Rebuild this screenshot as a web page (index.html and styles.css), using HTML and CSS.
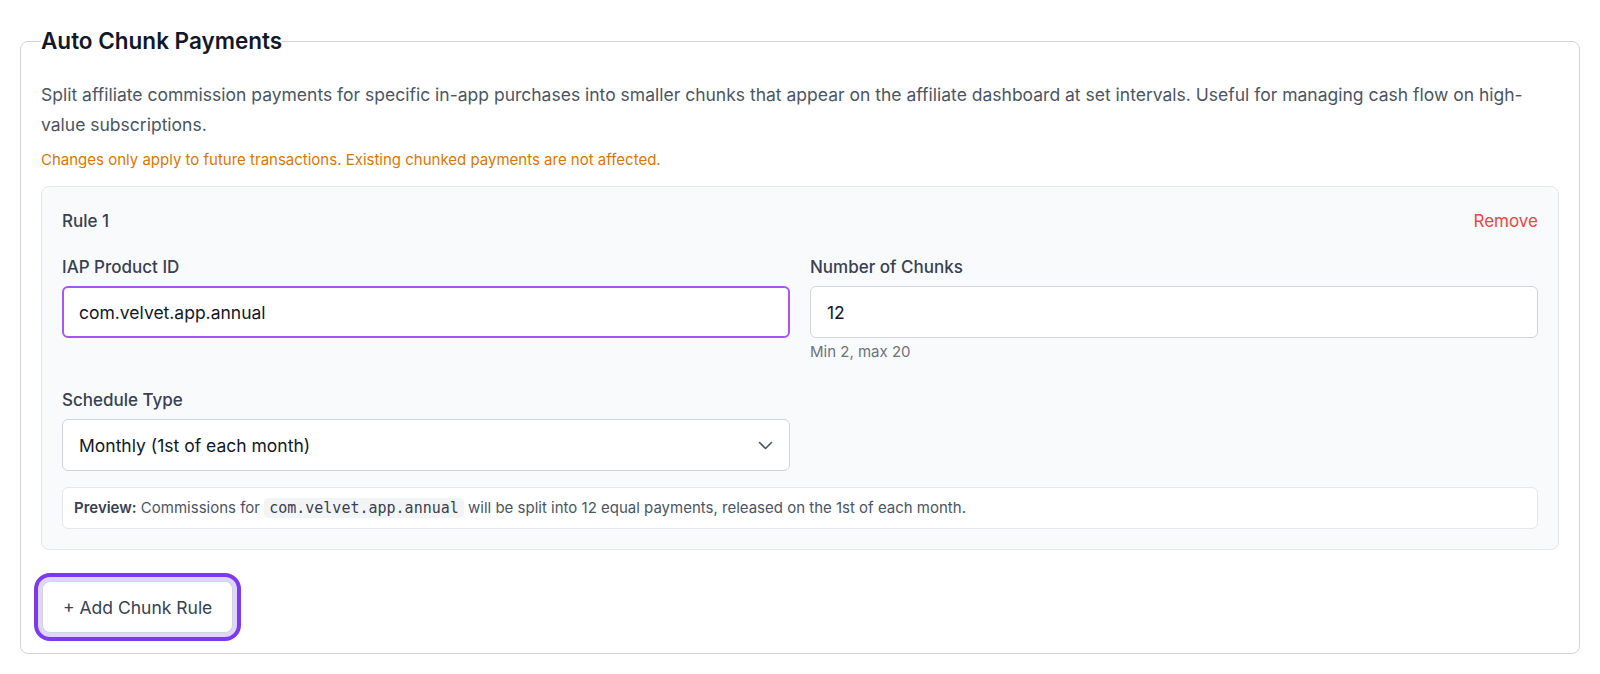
FILE: index.html
```html
<!DOCTYPE html>
<html lang="en">
<head>
<meta charset="utf-8">
<title>Auto Chunk Payments</title>
<link rel="stylesheet" href="styles.css">
</head>
<body>
<fieldset class="panel">
  <legend class="panel-title">Auto Chunk Payments</legend>
  <p class="desc">Split affiliate commission payments for specific in-app purchases into smaller chunks that appear on the affiliate dashboard at set intervals. Useful for managing cash flow on high-value subscriptions.</p>
  <p class="warn">Changes only apply to future transactions. Existing chunked payments are not affected.</p>

  <div class="rule-card">
    <div class="rule-head">
      <span class="rule-name">Rule 1</span>
      <button class="remove" type="button">Remove</button>
    </div>
    <div class="rule-grid">
      <div class="field">
        <label class="label" for="pid">IAP Product ID</label>
        <input id="pid" class="input input-focus" type="text" value="com.velvet.app.annual">
      </div>
      <div class="field">
        <label class="label" for="chunks">Number of Chunks</label>
        <input id="chunks" class="input" type="text" value="12">
        <div class="hint">Min 2, max 20</div>
      </div>
      <div class="field">
        <label class="label">Schedule Type</label>
        <div class="select">
          <span>Monthly (1st of each month)</span>
          <svg class="chev" width="15" height="9" viewBox="0 0 15 9" fill="none" stroke="#4b5563" stroke-width="1.6" stroke-linecap="round" stroke-linejoin="round"><path d="M1.5 1.5l6 6 6-6"/></svg>
        </div>
      </div>
    </div>
    <div class="preview"><strong>Preview:</strong> Commissions for <code class="code">com.velvet.app.annual</code> will be split into 12 equal payments, released on the 1st of each month.</div>
  </div>

  <button class="add-btn" type="button">+ Add Chunk Rule</button>
</fieldset>
</body>
</html>
```

FILE: styles.css
```css
* { box-sizing: border-box; }
html, body { margin: 0; background: #ffffff; }
body {
  padding: 25px 20px 20px 20px;
  font-family: Inter, "Noto Sans", "Liberation Sans", sans-serif;
  color: #1f2937;
}
.panel {
  margin: 0;
  border: 1px solid #d1d5db;
  border-radius: 8px;
  padding: 23px 20px 20px 20px;
  min-width: 0;
}
.panel-title {
  padding: 0;
  font-size: 22.5px;
  line-height: 32px;
  font-weight: 600;
  color: #111827;
}
.desc {
  margin: 0;
  font-size: 17.5px;
  line-height: 30px;
  color: #4b5563;
}
.warn {
  margin: 10px 0 0 0;
  font-size: 15px;
  line-height: 20px;
  color: #d97706;
}
.rule-card {
  margin-top: 16px;
  background: #f9fafb;
  border: 1px solid #e5e7eb;
  border-radius: 8px;
  padding: 20px;
}
.rule-head {
  display: flex;
  justify-content: space-between;
  align-items: center;
  height: 28px;
}
.rule-name {
  font-size: 17px;
  font-weight: 500;
  color: #374151;
}
.remove {
  border: 0;
  background: none;
  padding: 0;
  font: inherit;
  font-size: 17px;
  color: #ef4444;
  cursor: pointer;
}
.rule-grid {
  margin-top: 20px;
  display: grid;
  grid-template-columns: 1fr 1fr;
  column-gap: 20px;
  row-gap: 26px;
}
.field { display: flex; flex-direction: column; }
.label {
  font-size: 17px;
  line-height: 24px;
  font-weight: 500;
  color: #374151;
  margin-bottom: 7px;
}
.input {
  height: 52px;
  border: 1px solid #d1d5db;
  border-radius: 6px;
  background: #fff;
  padding: 0 16px;
  font: inherit;
  font-size: 17.5px;
  color: #111827;
  outline: none;
}
.input-focus {
  border: 2px solid #a855f7;
  padding: 0 15px;
}
.hint {
  margin-top: 4px;
  font-size: 15px;
  line-height: 20px;
  color: #6b7280;
}
.select {
  height: 52px;
  border: 1px solid #d1d5db;
  border-radius: 6px;
  background: #fff;
  padding: 0 16px;
  display: flex;
  align-items: center;
  justify-content: space-between;
  font-size: 17.5px;
  color: #111827;
}
.chev { margin-right: 0; }
.preview {
  margin-top: 16px;
  background: #fff;
  border: 1px solid #e5e7eb;
  border-radius: 6px;
  padding: 10px 11px;
  font-size: 15px;
  line-height: 20px;
  color: #4b5563;
}
.preview strong { font-weight: 600; color: #374151; }
.code {
  font-family: "DejaVu Sans Mono", "Liberation Mono", monospace;
  font-size: 15px;
  background: #f3f4f6;
  border-radius: 4px;
  padding: 1px 5px;
  color: #374151;
}
.add-btn {
  margin: 31px 0 0 1px;
  height: 52px;
  padding: 0 20px;
  border: 1px solid #d1d5db;
  border-radius: 8px;
  background: #fff;
  font: inherit;
  font-size: 17.5px;
  font-weight: 400;
  color: #374151;
  box-shadow: 0 0 0 4px #ddd6fe, 0 0 0 8px #7c3aed;
  cursor: pointer;
}
```
